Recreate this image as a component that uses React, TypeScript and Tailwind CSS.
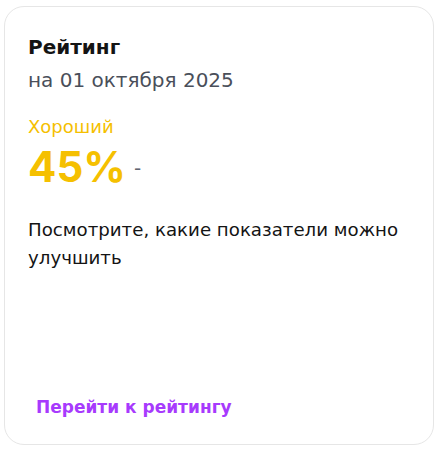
export default function App() {
  return (
    <div className="w-[440px] h-[450px] bg-white pt-[6px] pl-[4px]" style={{ fontFamily: "'DejaVu Sans', Inter, sans-serif" }}>
      <div className="w-[430px] h-[439px] rounded-[20px] border border-[#e6e6e6] bg-white flex flex-col pl-[23px] pr-4 pt-[27px] pb-[25px]">
        <div className="text-[20px] font-bold leading-[26px] text-[#141414]">Рейтинг</div>
        <div className="text-[20px] leading-[26px] mt-[7px] text-[#4a4f5a]">на 01 октября 2025</div>
        <div className="text-[18px] leading-[24px] mt-[22px] text-[#f5c000]">Хороший</div>
        <div className="flex items-center gap-[8px] mt-[4px]">
          <span className="text-[42px] font-bold leading-[46px] text-[#f5c000]" style={{ fontFamily: "Inter, sans-serif" }}>45%</span>
          <span className="text-[20px] leading-[46px] text-[#5f6672] pt-[2px]">-</span>
        </div>
        <div className="text-[18.2px] leading-[28px] mt-[25px] text-[#141414]">Посмотрите, какие показатели можно улучшить</div>
        <div className="mt-auto pl-[8px] text-[17px] leading-[24px] font-bold text-[#a73afd]">Перейти к рейтингу</div>
      </div>
    </div>
  );
}
